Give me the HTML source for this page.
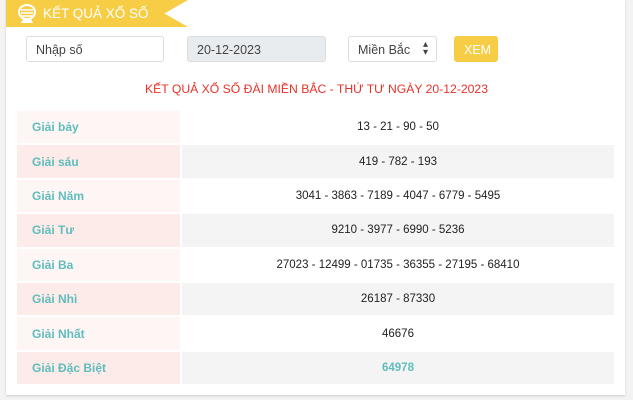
<!DOCTYPE html>
<html><head><meta charset="utf-8"><style>
body{margin:0;width:633px;height:400px;background:#f3f3f3;font-family:"Liberation Sans",sans-serif;overflow:hidden;position:relative}
.card{position:absolute;left:6px;top:0;width:619px;height:395px;background:#fff;box-shadow:0 1px 2px #ccc}
.hdr{position:absolute;left:6px;top:0;width:182px;height:27px;background:#f7cd46;clip-path:polygon(0 0,100% 0,87% 50%,100% 100%,0 100%)}
.hdr span{position:absolute;left:37px;top:6px;color:#fff;font-size:13.5px}
.inp{position:absolute;top:36px;height:26px;border:1px solid #ddd;border-radius:3px;font-size:12.5px;color:#444;box-sizing:border-box;padding:6px 9px}
.title{position:absolute;top:82px;left:0;width:633px;text-align:center;color:#e8322a;font-size:12.2px}
table{position:absolute;left:15px;top:109px;width:601px;border-collapse:collapse;font-size:11.5px}
td{height:32.4px;padding:0;border:2px solid #fff}
td.l{width:148px;padding-left:15px;color:#5fbdbd;font-weight:bold;font-size:12px}
td.r{text-align:center;color:#222}
tr:nth-child(odd) td.l{background:#fdf6f4}
tr:nth-child(even) td.l{background:#fcebe8}
tr:nth-child(even) td.r{background:#f4f4f4}
</style></head><body>
<div class="card"></div>
<div class="hdr"><svg style="position:absolute;left:10px;top:3px" width="22" height="21" viewBox="0 0 22 21"><ellipse cx="11" cy="9" rx="8" ry="7" fill="none" stroke="#fff" stroke-width="2"/><path d="M5 7h12M5 10h12M4 13h14" stroke="#fff" stroke-width="1.5"/><path d="M7 16l-2 4h12l-2-4" fill="#fff"/></svg><span>KẾT QUẢ XỔ SỐ</span></div>
<div class="inp" style="left:26px;width:138px">Nhập số</div>
<div class="inp" style="left:187px;width:139px;background:#e9ecef">20-12-2023</div>
<div class="inp" style="left:348px;width:89px">Miền Bắc <span style="position:absolute;right:8px;top:4px;font-size:10px;line-height:8px">▴<br>▾</span></div>
<div class="inp" style="left:454px;width:44px;background:#f7cd46;border-color:#f7cd46;color:#fff;padding-left:9px">XEM</div>
<div class="title">KẾT QUẢ XỔ SỐ ĐÀI MIỀN BẮC - THỨ TƯ NGÀY 20-12-2023</div>
<table>
<tr><td class="l">Giải bảy</td><td class="r">13 - 21 - 90 - 50</td></tr>
<tr><td class="l">Giải sáu</td><td class="r">419 - 782 - 193</td></tr>
<tr><td class="l">Giải Năm</td><td class="r">3041 - 3863 - 7189 - 4047 - 6779 - 5495</td></tr>
<tr><td class="l">Giải Tư</td><td class="r">9210 - 3977 - 6990 - 5236</td></tr>
<tr><td class="l">Giải Ba</td><td class="r">27023 - 12499 - 01735 - 36355 - 27195 - 68410</td></tr>
<tr><td class="l">Giải Nhì</td><td class="r">26187 - 87330</td></tr>
<tr><td class="l">Giải Nhất</td><td class="r">46676</td></tr>
<tr><td class="l">Giải Đặc Biệt</td><td class="r" style="color:#5fbdbd;font-weight:bold">64978</td></tr>
</table>
</body></html>
